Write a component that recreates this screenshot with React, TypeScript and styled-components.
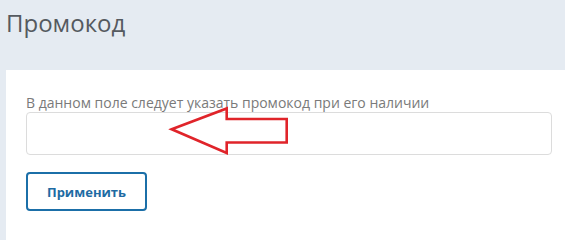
import React from "react";
import styled, { createGlobalStyle } from "styled-components";

const Global = createGlobalStyle`
  html, body { margin: 0; padding: 0; }
  body {
    background: #e5ebf2;
    font-family: "Open Sans", "Noto Sans", sans-serif;
    overflow: hidden;
  }
`;

const Page = styled.div`
  display: flex;
  flex-direction: column;
  height: 100vh;
  min-height: 230px;
`;

const Title = styled.h1`
  margin: 0;
  padding: 6px 0 0 6px;
  height: 70px;
  flex: none;
  box-sizing: border-box;
  font-size: 24px;
  font-weight: 400;
  color: #555a60;
  line-height: 33px;
`;

const Card = styled.div`
  flex: 1;
  margin-left: 6px;
  background: #ffffff;
  padding: 24px 13px 0 20px;
  display: flex;
  flex-direction: column;
  align-items: flex-start;
  position: relative;
`;

const Label = styled.label`
  font-size: 14px;
  color: #7a7a7a;
  line-height: 18px;
`;

const Input = styled.input`
  box-sizing: border-box;
  width: 526px;
  height: 43px;
  border: 1px solid #dcdcdc;
  border-radius: 4px;
  outline: none;
  background: #fff;
`;

const Button = styled.button`
  margin-top: 17px;
  box-sizing: border-box;
  width: 121px;
  height: 39px;
  border: 2px solid #1b6fa8;
  border-radius: 4px;
  background: #fff;
  color: #1e6ba3;
  font-family: "Open Sans", "Noto Sans", sans-serif;
  font-weight: 700;
  font-size: 13px;
  cursor: pointer;
`;

const Arrow = styled.svg`
  position: absolute;
  left: 0;
  top: 0;
  width: 559px;
  height: 160px;
  pointer-events: none;
`;

export default function App() {
  return (
    <>
      <Global />
      <Page>
        <Title>Промокод</Title>
        <Card>
          <Label>В данном поле следует указать промокод при его наличии</Label>
          <Input />
          <Button>Применить</Button>
          <Arrow viewBox="0 0 559 160">
            <polygon
              points="165.7,59.3 220.7,38.5 220.7,49 280.7,49 280.7,72.5 220.7,72.5 220.7,83"
              fill="none"
              stroke="#e0242a"
              strokeWidth="2.6"
              strokeLinejoin="miter"
            />
          </Arrow>
        </Card>
      </Page>
    </>
  );
}
